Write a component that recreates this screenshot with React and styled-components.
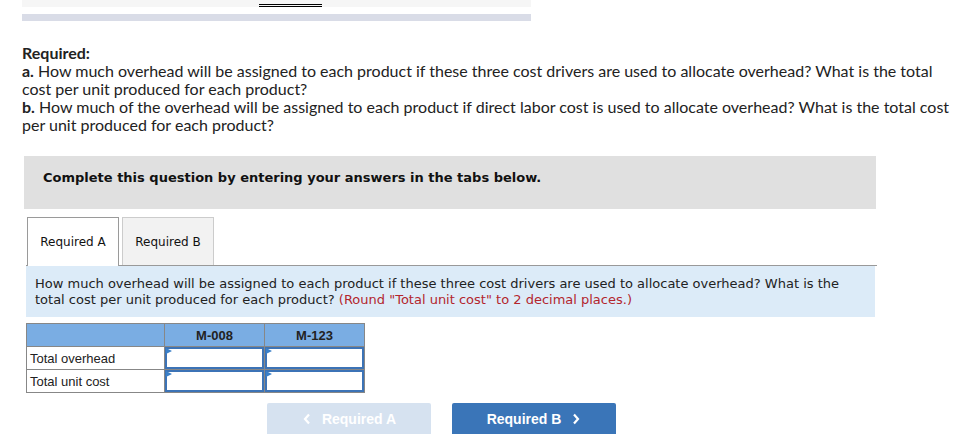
import styled, { createGlobalStyle } from "styled-components";

const GlobalStyle = createGlobalStyle`
  body {
    margin: 0;
    background: #fff;
    overflow: hidden;
    font-family: "Lato", "Liberation Sans", sans-serif;
  }
`;

const Page = styled.div`
  width: 966px;
  display: flex;
  flex-direction: column;
  align-items: flex-start;

  & > * {
    flex-shrink: 0;
  }
`;

const TopStrip = styled.div`
  margin-left: 22px;
  width: 509px;
  height: 7px;
  background: #f6f6f6;
  display: flex;
`;

const DoubleRule = styled.div`
  margin-left: 237px;
  margin-top: 4px;
  width: 63px;
  height: 0;
  border-top: 3px double #000;
`;

const ShadeBar = styled.div`
  margin-left: 22px;
  margin-top: 7px;
  width: 509px;
  height: 7px;
  background: #d9dce7;
`;

const Question = styled.div`
  margin: 23px 0 0 22px;
  width: 940px;
  font-size: 16px;
  line-height: 18px;
  color: #222;
`;

const Line = styled.div``;

const Bold = styled.b`
  font-weight: 700;
`;

const Notice = styled.div`
  box-sizing: border-box;
  margin: 22px 0 0 24px;
  width: 852px;
  height: 53px;
  padding: 14px 0 0 19px;
  background: #e0e0e0;
  font-family: "DejaVu Sans", Verdana, sans-serif;
  font-size: 13px;
  line-height: 16px;
  font-weight: 700;
  color: #111;
`;

const TabRow = styled.div`
  margin: 8px 0 0 26px;
  width: 850px;
  display: flex;
  gap: 3px;
  padding-left: 1px;
  border-bottom: 1px solid #999;
`;

const Tab = styled.div`
  width: 90px;
  display: flex;
  align-items: center;
  justify-content: center;
  font-family: "DejaVu Sans", Verdana, sans-serif;
  font-size: 12px;
  color: #111;
  border: 1px solid ${(p) => (p.$active ? "#9a9a9a" : "#cccccc")};
  border-bottom: none;
  background: ${(p) => (p.$active ? "#fff" : "#f2f2f2")};
  margin-bottom: ${(p) => (p.$active ? "-1px" : "0")};
  height: ${(p) => (p.$active ? "48px" : "47px")};
`;

const Prompt = styled.div`
  margin-left: 26px;
  width: 830px;
  padding: 10px 10px 9px 9px;
  background: #dcebf8;
  font-family: "DejaVu Sans", Verdana, sans-serif;
  font-size: 13px;
  line-height: 16px;
  color: #222;
`;

const Hint = styled.span`
  color: #b3262e;
`;

const Grid = styled.table`
  margin: 6px 0 0 26px;
  border-collapse: collapse;
  font-family: "Liberation Sans", Arial, sans-serif;
  font-size: 13px;
  color: #222;
`;

const Head = styled.th`
  height: 22px;
  padding: 0;
  width: ${(p) => p.$w}px;
  background: #7aade3;
  border: 1px solid #878787;
  font-weight: 700;
  text-align: center;
`;

const Label = styled.td`
  height: 22px;
  padding: 0 0 0 3px;
  border: 1px solid #878787;
  text-align: left;
`;

const Cell = styled.td`
  height: 22px;
  padding: 0;
  border: 1px solid #878787;
`;

const Field = styled.div`
  box-sizing: border-box;
  height: 22px;
  width: 100%;
  border: 2px solid #3c73b6;
  background: #fff;
  position: relative;

  &::before {
    content: "";
    position: absolute;
    left: -1px;
    top: -1px;
    border-top: 3px solid transparent;
    border-bottom: 3px solid transparent;
    border-left: 6px solid #3b80c8;
  }
`;

const Nav = styled.div`
  margin: 10px 0 0 267px;
  display: flex;
  gap: 21px;
`;

const NavButton = styled.div`
  width: 164px;
  height: 34px;
  display: flex;
  align-items: center;
  justify-content: center;
  gap: 10px;
  border-radius: 2px;
  background: ${(p) => (p.$disabled ? "#d6e2f0" : "#3a75b8")};
  color: #fff;
  font-family: "Liberation Sans", Arial, sans-serif;
  font-size: 14px;
  font-weight: 700;
  padding-bottom: 3px;
  box-sizing: border-box;
`;

const Chevron = styled.svg`
  width: 10px;
  height: 12px;
`;

const ChevronLeft = () => (
  <Chevron viewBox="0 0 10 12">
    <path d="M7 1.5 L3 6 L7 10.5" fill="none" stroke="#fff" strokeWidth="2.2" />
  </Chevron>
);

const ChevronRight = () => (
  <Chevron viewBox="0 0 10 12">
    <path d="M3 1.5 L7 6 L3 10.5" fill="none" stroke="#fff" strokeWidth="2.2" />
  </Chevron>
);

const rows = ["Total overhead", "Total unit cost"];

export default function App() {
  return (
    <Page>
      <GlobalStyle />
      <TopStrip>
        <DoubleRule />
      </TopStrip>
      <ShadeBar />
      <Question>
        <Line>
          <Bold>Required:</Bold>
        </Line>
        <Line>
          <Bold>a.</Bold> How much overhead will be assigned to each product if these three cost
          drivers are used to allocate overhead? What is the total
        </Line>
        <Line>cost per unit produced for each product?</Line>
        <Line>
          <Bold>b.</Bold> How much of the overhead will be assigned to each product if direct labor
          cost is used to allocate overhead? What is the total cost
        </Line>
        <Line>per unit produced for each product?</Line>
      </Question>
      <Notice>Complete this question by entering your answers in the tabs below.</Notice>
      <TabRow>
        <Tab $active>Required A</Tab>
        <Tab>Required B</Tab>
      </TabRow>
      <Prompt>
        How much overhead will be assigned to each product if these three cost drivers are used
        to allocate overhead? What is the total cost per unit produced for each product?{" "}
        <Hint>(Round "Total unit cost" to 2 decimal places.)</Hint>
      </Prompt>
      <Grid>
        <thead>
          <tr>
            <Head $w={137} />
            <Head $w={99}>M-008</Head>
            <Head $w={99}>M-123</Head>
          </tr>
        </thead>
        <tbody>
          {rows.map((r) => (
            <tr key={r}>
              <Label>{r}</Label>
              <Cell>
                <Field />
              </Cell>
              <Cell>
                <Field />
              </Cell>
            </tr>
          ))}
        </tbody>
      </Grid>
      <Nav>
        <NavButton $disabled>
          <ChevronLeft />
          Required A
        </NavButton>
        <NavButton>
          Required B
          <ChevronRight />
        </NavButton>
      </Nav>
    </Page>
  );
}
